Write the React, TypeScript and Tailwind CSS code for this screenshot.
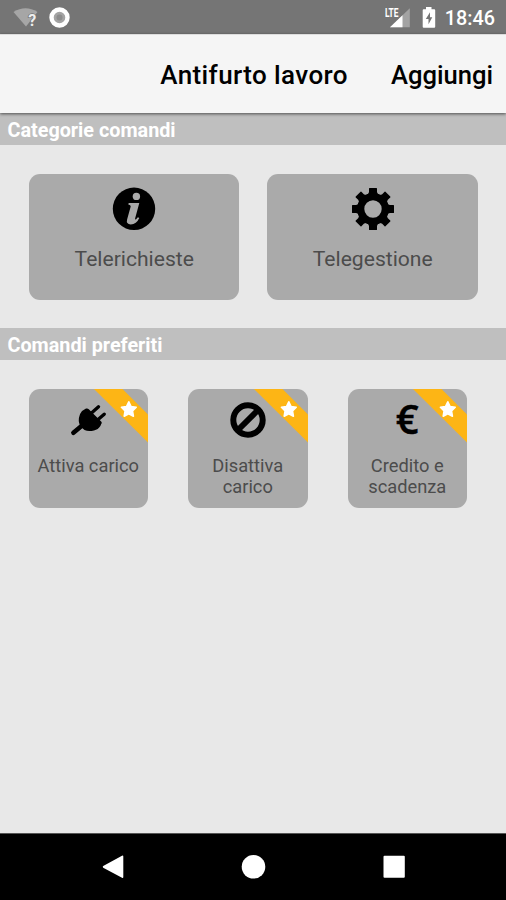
import type { ReactNode } from "react";

interface Command {
  label: string;
  icon: ReactNode;
}

function InfoIcon() {
  return (
    <svg viewBox="0 0 42 42" className="size-[42px] overflow-visible">
      <circle cx="21" cy="20.8" r="21.2" />
      <circle cx="23.4" cy="8.4" r="3.7" fill="#aaaaaa" />
      <path
        d="M15.7 15H26.3L22.1 30.4Q21.9 32 23.1 31.2L24.9 29.2 26.3 30Q23.5 36.2 17.7 36.4 12.9 36.2 14.1 31.6L17.7 18.4Q17.9 17 15.3 16.6Z"
        fill="#aaaaaa"
      />
    </svg>
  );
}

function GearIcon() {
  const teeth = [0, 45, 90, 135, 180, 225, 270, 315];
  return (
    <svg viewBox="-21 -21 42 42" className="ml-px size-[42px]">
      <circle r="12.3" fill="none" stroke="currentColor" strokeWidth="7.2" />
      {teeth.map((angle) => (
        <path
          key={angle}
          d="M-6-14Q-4.2-15.3-4-17V-20.4Q-4-21-3.4-21H3.4Q4-21 4-20.4V-17Q4.2-15.3 6-14Z"
          transform={`rotate(${angle})`}
        />
      ))}
    </svg>
  );
}

function PlugIcon() {
  return (
    <svg viewBox="0 0 36 36" className="size-9">
      <path d="M12 9 16 6.6Q17.6 6 18.8 7.2L31.4 19.8Q32.4 21 31.2 22L30.4 24Q28.2 27.6 24 28.4Q18.5 30 14.5 28L11.2 25.2Q8.2 21.2 8.9 16Q9.6 11.6 12 9Z" />
      <g fill="none" stroke="currentColor" strokeLinecap="round">
        <path d="M3.4 30.8 13 22.8" strokeWidth="4.6" />
        <path d="M21.5 11 28.5 4.8M27.5 18 34.2 12.2" strokeWidth="3.3" />
      </g>
    </svg>
  );
}

function BanIcon() {
  return (
    <svg
      viewBox="0 0 36 36"
      className="size-9"
      fill="none"
      stroke="currentColor"
      strokeWidth="6"
    >
      <circle cx="18" cy="18" r="14.7" />
      <path d="M8 28 28 8" />
    </svg>
  );
}

function EuroIcon() {
  return (
    <span className="-mt-px mb-px font-['Open_Sans',sans-serif] text-[40px] leading-9 font-semibold [-webkit-text-stroke:0.5px_black]">
      €
    </span>
  );
}

const categories: Command[] = [
  { label: "Telerichieste", icon: <InfoIcon /> },
  { label: "Telegestione", icon: <GearIcon /> },
];

const favorites: Command[] = [
  { label: "Attiva carico", icon: <PlugIcon /> },
  { label: "Disattiva carico", icon: <BanIcon /> },
  { label: "Credito e scadenza", icon: <EuroIcon /> },
];

function StatusBar() {
  return (
    <div className="flex h-[34px] items-center bg-[#757575] text-white">
      <svg width="60" height="34" viewBox="0 0 60 34" className="ml-3 shrink-0">
        <path d="M1.5 12Q13.5 4.5 25.5 12L14 26.5Z" fill="#a6a6a6" />
        <text
          x="16.3"
          y="25.5"
          className="fill-[#eeeeee] stroke-[#757575] stroke-[1.5] font-['Roboto',sans-serif] text-[16px] font-bold"
          paintOrder="stroke"
        >
          ?
        </text>
        <circle cx="47.5" cy="17.5" r="8" fill="#a3a3a3" stroke="#ffffff" strokeWidth="4.4" />
        <circle cx="47.5" cy="17.5" r="3" fill="#8c8c8c" />
      </svg>
      <div className="ml-auto flex items-center pr-[11px]">
        <svg width="27" height="34" viewBox="0 0 27 34">
          <path d="M5 27.2 24.8 8.2V27.2Z" fill="#a3a3a3" />
          <path d="M5 27.2 17.5 15.2V27.2Z" fill="#ffffff" />
          <text
            x="0"
            y="16.5"
            textLength="13.5"
            lengthAdjust="spacingAndGlyphs"
            className="fill-white stroke-[#757575] stroke-1 font-['Roboto',sans-serif] text-[13px] font-bold"
            paintOrder="stroke"
          >
            LTE
          </text>
        </svg>
        <svg width="14" height="34" viewBox="0 0 14 34" className="ml-[10px]">
          <path d="M4 7H9.5V9.2H12.2Q13.2 9.2 13.2 10.2V26.7Q13.2 27.7 12.2 27.7H1.7Q.7 27.7.7 26.7V10.2Q.7 9.2 1.7 9.2H4Z" fill="#ffffff" />
          <path d="M8 12.2 3.8 19H6.5V24.3L10.3 17.2H8Z" fill="#757575" />
        </svg>
        <span className="ml-[9px] pt-[3px] text-[19.8px] leading-6 font-medium">18:46</span>
      </div>
    </div>
  );
}

function SectionTitle({ children }: { children: ReactNode }) {
  return (
    <h2 className="flex h-8 items-center bg-[#bfbfbf] pl-[7.5px] pt-[3px] text-[19.8px] font-bold text-white">
      {children}
    </h2>
  );
}

function Ribbon() {
  return (
    <svg viewBox="0 0 54 54" className="absolute top-0 right-0 size-[54px]">
      <path d="M0 0H28.5L54 25.5V53.5Z" fill="#fdb515" />
      <path
        d="M34.8 12.8 37.1 17.5 42.2 18.3 38.5 22 39.4 27.2 34.8 24.8 30.2 27.2 31.1 22 27.4 18.3 32.5 17.5Z"
        fill="#ffffff"
        stroke="#ffffff"
        strokeWidth="1.6"
        strokeLinejoin="round"
      />
    </svg>
  );
}

export default function App() {
  return (
    <div className="flex h-[900px] w-[506px] flex-col overflow-hidden bg-[#e8e8e8] font-['Roboto',sans-serif] text-black">
      <StatusBar />
      <header className="z-10 flex h-[79px] items-center justify-end gap-[43px] border-t border-[#dddddd] bg-[#f5f5f5] pr-[13px] pt-[2px] font-medium shadow-[0_1px_3px_rgba(0,0,0,0.6)]">
        <h1 className="text-[26px] tracking-[0.4px]">Antifurto lavoro</h1>
        <button className="text-[25.6px]">Aggiungi</button>
      </header>

      <main className="flex-1">
        <SectionTitle>Categorie comandi</SectionTitle>
        <div className="flex gap-7 px-[28.5px] pt-[28.5px] pb-[28.5px]">
          {categories.map((command) => (
            <button
              key={command.label}
              className="flex h-[126px] w-[211px] flex-col items-center rounded-[11px] bg-[#aaaaaa] pt-[14px]"
            >
              {command.icon}
              <span className="mt-4 pl-px text-[21.1px] leading-[26px] text-[#4c4c4c]">
                {command.label}
              </span>
            </button>
          ))}
        </div>

        <SectionTitle>Comandi preferiti</SectionTitle>
        <div className="flex gap-10 px-[28.5px] pt-[29px]">
          {favorites.map((command) => (
            <button
              key={command.label}
              className="relative flex h-[119px] w-[119.5px] flex-col items-center overflow-hidden rounded-[11px] bg-[#aaaaaa] pt-[13px]"
            >
              <Ribbon />
              {command.icon}
              <span className="mt-[17px] w-[106px] text-[18.3px] leading-[21px] text-[#4c4c4c]">
                {command.label}
              </span>
            </button>
          ))}
        </div>
      </main>

      <nav className="h-[67px] border-t border-[#555555] bg-black">
        <svg viewBox="0 0 506 66" className="h-[66px] w-full" fill="#ffffff">
          <path d="M103.2 32 122 21.7Q123.3 21 123.3 22.5V43Q123.3 44.5 122 43.8L103.2 33.7Q102.2 32.8 103.2 32Z" />
          <circle cx="253.5" cy="32.8" r="11.8" />
          <rect x="383.5" y="21.8" width="21.3" height="22" rx="1" />
        </svg>
      </nav>
    </div>
  );
}
